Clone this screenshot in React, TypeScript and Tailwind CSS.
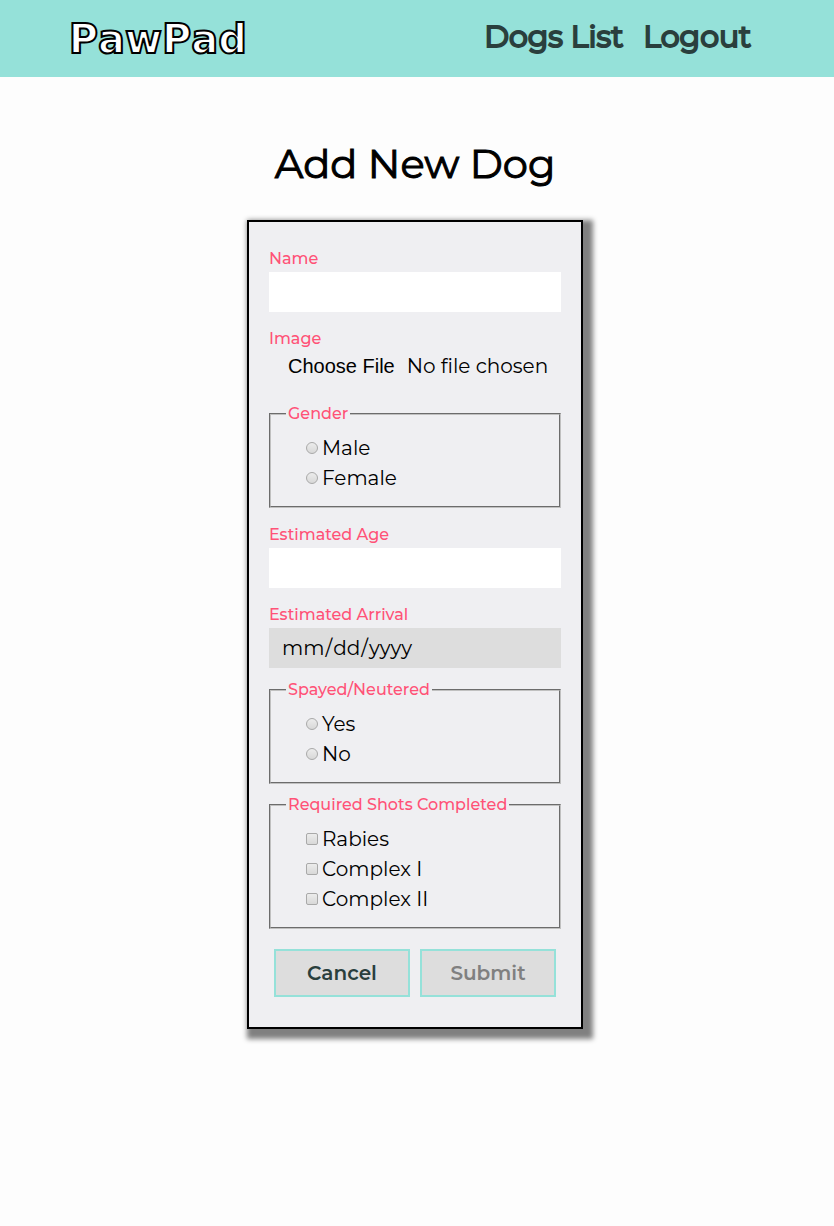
import React, { useState } from "react";

const labelClass = "block h-6 text-base leading-[22px] font-medium text-[#ff5277]";
const fieldClass = "block h-10 w-full px-3 text-xl text-black outline-none";

type ChoiceProps = { type: "radio" | "checkbox"; name: string; label: string };

function Choice({ type, name, label }: ChoiceProps) {
  const id = `${name}-${label.toLowerCase().replace(/\s/g, "-")}`;
  return (
    <div className="flex h-[30px] items-center gap-1">
      <input
        id={id}
        type={type}
        name={name}
        value={label}
        className={`size-3 shrink-0 appearance-none border border-[#a9a9a9] bg-linear-to-b from-[#ececec] to-[#d8d8d8] checked:from-[#555] checked:to-[#555] ${
          type === "radio" ? "rounded-full" : "rounded-[2px]"
        }`}
      />
      <label htmlFor={id} className="text-xl text-black">
        {label}
      </label>
    </div>
  );
}

type GroupProps = { legend: string; name: string; type: "radio" | "checkbox"; options: string[] };

function Group({ legend, name, type, options }: GroupProps) {
  return (
    <fieldset className="border-2 border-[#c0c0c0] px-[15px] pt-[7px] pb-[13px] [border-style:groove]">
      <legend className="px-[2px] text-base leading-6 font-medium text-[#ff5277]">{legend}</legend>
      <div className="pl-5">
        {options.map((option) => (
          <Choice key={option} type={type} name={name} label={option} />
        ))}
      </div>
    </fieldset>
  );
}

export default function App() {
  const [name, setName] = useState("");
  const [age, setAge] = useState("");

  return (
    <div className="min-h-screen bg-[#fdfdfd] font-['Montserrat','Inter',sans-serif] text-black">
      <header className="flex h-[77px] items-center justify-between bg-[#95e1d9] px-[8%]">
        <a
          href="#home"
          className="pl-[2px] font-['DejaVu_Sans',sans-serif] text-[40px] font-bold text-white [-webkit-text-stroke:2px_black] [font-kerning:none]"
        >
          PawPad
        </a>
        <nav className="flex gap-5 pr-4 pb-1 text-[30px] font-normal text-[#2a3f3d] [-webkit-text-stroke:2px_#2a3f3d]">
          <a href="#dogs">Dogs List</a>
          <a href="#logout">Logout</a>
        </nav>
      </header>

      <main className="flex flex-col items-center pt-[57px] pr-5 pb-16 pl-4">
        <h1 className="text-[40px] leading-[60px] font-normal [-webkit-text-stroke:1px_black]">Add New Dog</h1>

        <form
          className="mt-[26px] w-full max-w-[336px] border-2 border-black bg-[#efeff2] px-5 pt-[26px] pb-[30px] shadow-[5px_5px_5px_5px_gray]"
          onSubmit={(event) => event.preventDefault()}
        >
          <div>
            <label htmlFor="name" className={labelClass}>Name</label>
            <input
              id="name"
              type="text"
              value={name}
              onChange={(event) => setName(event.target.value)}
              className={`${fieldClass} bg-white`}
            />
          </div>

          <div className="mt-4 mb-[10px]">
            <label htmlFor="image" className={labelClass}>Image</label>
            <input
              id="image"
              type="file"
              className="block h-10 w-full pl-[19px] text-xl leading-7 text-black file:mr-3 file:font-['Liberation_Sans',sans-serif] file:text-xl"
            />
          </div>

          <Group legend="Gender" name="gender" type="radio" options={["Male", "Female"]} />

          <div className="mt-4">
            <label htmlFor="age" className={labelClass}>Estimated Age</label>
            <input
              id="age"
              type="text"
              value={age}
              onChange={(event) => setAge(event.target.value)}
              className={`${fieldClass} bg-white`}
            />
          </div>

          <div className="mt-4 mb-[10px]">
            <label htmlFor="arrival" className={labelClass}>Estimated Arrival</label>
            <input
              id="arrival"
              type="date"
              className={`${fieldClass} bg-[#ddd] [&::-webkit-calendar-picker-indicator]:hidden`}
            />
          </div>

          <Group legend="Spayed/Neutered" name="spayed" type="radio" options={["Yes", "No"]} />
          <div className="mt-[9px]">
            <Group
              legend="Required Shots Completed"
              name="shots"
              type="checkbox"
              options={["Rabies", "Complex I", "Complex II"]}
            />
          </div>

          <div className="mt-5 flex gap-[10px] px-[5px]">
            <button type="button" className="h-12 flex-1 border-2 border-[#95e1d9] bg-[#ddd] text-xl font-semibold text-[#2a3f3d]">
              Cancel
            </button>
            <button type="submit" disabled className="h-12 flex-1 border-2 border-[#95e1d9] bg-[#ddd] text-xl font-semibold text-[#808080]">
              Submit
            </button>
          </div>
        </form>
      </main>
    </div>
  );
}
